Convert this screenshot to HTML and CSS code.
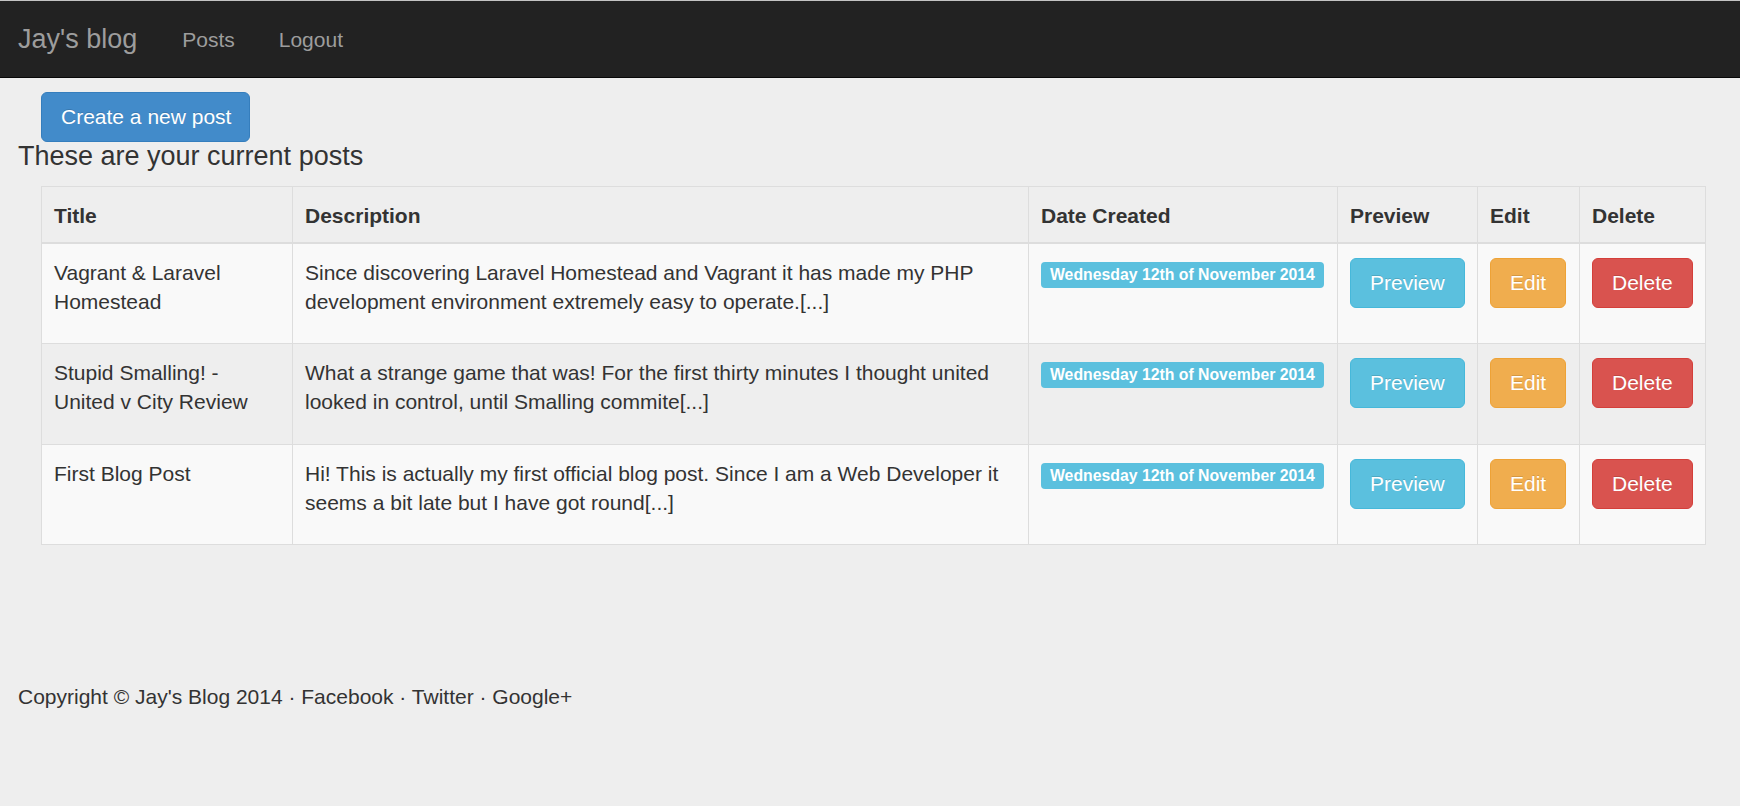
FILE: index.html
```html
<!DOCTYPE html>
<html lang="en">
<head>
<meta charset="utf-8">
<title>Jay's blog</title>
<link rel="stylesheet" href="styles.css">
</head>
<body>
<nav class="navbar">
  <a class="brand" href="#">Jay's blog</a>
  <ul class="nav">
    <li><a href="#">Posts</a></li>
    <li><a href="#">Logout</a></li>
  </ul>
</nav>
<main class="content">
  <a class="btn btn-primary create" href="#">Create a new post</a>
  <h3 class="heading">These are your current posts</h3>
  <table class="posts">
    <thead>
      <tr>
        <th class="c-title">Title</th>
        <th class="c-desc">Description</th>
        <th class="c-date">Date Created</th>
        <th class="c-prev">Preview</th>
        <th class="c-edit">Edit</th>
        <th class="c-del">Delete</th>
      </tr>
    </thead>
    <tbody>
      <tr>
        <td>Vagrant &amp; Laravel Homestead</td>
        <td>Since discovering Laravel Homestead and Vagrant it has made my PHP development environment extremely easy to operate.[...]</td>
        <td><span class="label">Wednesday 12th of November 2014</span></td>
        <td><a class="btn btn-info" href="#">Preview</a></td>
        <td><a class="btn btn-warning" href="#">Edit</a></td>
        <td><a class="btn btn-danger" href="#">Delete</a></td>
      </tr>
      <tr>
        <td>Stupid Smalling! - United v City Review</td>
        <td>What a strange game that was! For the first thirty minutes I thought united looked in control, until Smalling commite[...]</td>
        <td><span class="label">Wednesday 12th of November 2014</span></td>
        <td><a class="btn btn-info" href="#">Preview</a></td>
        <td><a class="btn btn-warning" href="#">Edit</a></td>
        <td><a class="btn btn-danger" href="#">Delete</a></td>
      </tr>
      <tr>
        <td>First Blog Post</td>
        <td>Hi! This is actually my first official blog post. Since I am a Web Developer it seems a bit late but I have got round[...]</td>
        <td><span class="label">Wednesday 12th of November 2014</span></td>
        <td><a class="btn btn-info" href="#">Preview</a></td>
        <td><a class="btn btn-warning" href="#">Edit</a></td>
        <td><a class="btn btn-danger" href="#">Delete</a></td>
      </tr>
    </tbody>
  </table>
</main>
<footer class="footer">
  <p>Copyright &copy; Jay's Blog 2014 &middot; Facebook &middot; Twitter &middot; Google+</p>
</footer>
</body>
</html>
```
FILE: styles.css
```css
* { box-sizing: border-box; }

html, body {
  margin: 0;
  padding: 0;
}

body {
  background: #eeeeee;
  color: #333333;
  font-family: "Liberation Sans", Arial, Helvetica, sans-serif;
  font-size: 21px;
  line-height: 29px;
}

a { text-decoration: none; }

.navbar {
  display: flex;
  align-items: center;
  height: 78px;
  background: #222222;
  border-top: 1px solid #c4c4c4;
  border-bottom: 1px solid #080808;
  padding-left: 18px;
}

.brand {
  color: #9d9d9d;
  font-size: 27px;
  line-height: 29px;
}

.nav {
  display: flex;
  list-style: none;
  margin: 0 0 0 23px;
  padding: 0;
}

.nav a {
  display: block;
  padding: 0 22px;
  color: #9d9d9d;
  font-size: 21px;
}

.content {
  padding-top: 14px;
}

.btn {
  display: inline-block;
  height: 50px;
  padding: 0 19px;
  border: 1px solid transparent;
  border-radius: 6px;
  color: #ffffff;
  font-size: 21px;
  line-height: 48px;
  white-space: nowrap;
  text-shadow: 0 -1px 0 rgba(0, 0, 0, 0.15);
}

.btn-primary { background: #428bca; border-color: #357ebd; }
.btn-info { background: #5bc0de; border-color: #46b8da; }
.btn-warning { background: #f0ad4e; border-color: #eea236; }
.btn-danger { background: #d9534f; border-color: #d43f3a; }

.create {
  display: block;
  width: 209px;
  margin-left: 41px;
}

.heading {
  margin: 0 0 15px 18px;
  font-size: 27px;
  line-height: 29px;
  font-weight: normal;
}

.posts {
  margin-left: 41px;
  width: 1664px;
  border-collapse: collapse;
  table-layout: fixed;
  border: 1px solid #dddddd;
}

.c-title { width: 251px; }
.c-desc { width: 736px; }
.c-date { width: 309px; }
.c-prev { width: 140px; }
.c-edit { width: 102px; }
.c-del { width: 126px; }

.posts th {
  text-align: left;
  font-weight: bold;
  padding: 14px 12px 12px;
  border: 1px solid #dddddd;
  border-bottom: 2px solid #dddddd;
  vertical-align: bottom;
}

.posts td {
  padding: 14px 12px 12px;
  border: 1px solid #dddddd;
  vertical-align: top;
  height: 100.5px;
}

.posts tbody tr:nth-child(odd) {
  background: #f9f9f9;
}

.label {
  display: inline-block;
  margin-top: 2px;
  height: 26px;
  padding: 0 9px;
  background: #5bc0de;
  border-radius: 4px;
  color: #ffffff;
  font-size: 15.8px;
  font-weight: bold;
  line-height: 26px;
  white-space: nowrap;
}

.footer {
  padding-left: 18px;
}

.footer p {
  margin: 137px 0 0;
}
```
